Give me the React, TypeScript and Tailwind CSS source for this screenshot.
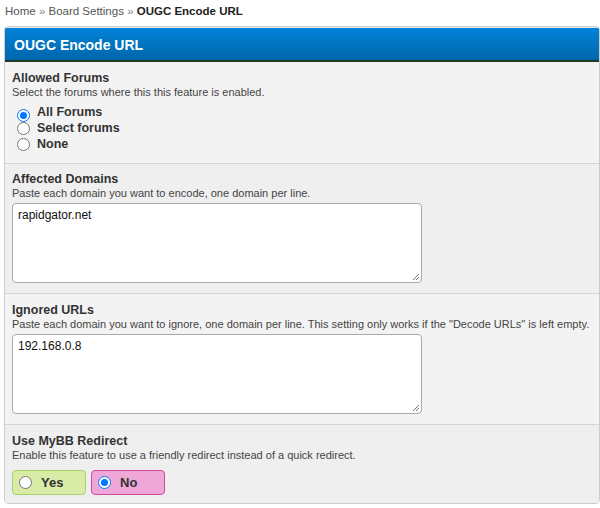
import React from "react";

const font = { fontFamily: "Tahoma, 'Liberation Sans', 'DejaVu Sans', sans-serif" };

function Radio({ checked }: { checked?: boolean }) {
  return (
    <span
      className={
        "inline-flex h-[13px] w-[13px] shrink-0 items-center justify-center rounded-full border " +
        (checked ? "border-[#0075ff] bg-white" : "border-[#767676] bg-white")
      }
    >
      {checked && <span className="h-[7px] w-[7px] rounded-full bg-[#0075ff]" />}
    </span>
  );
}

function Row({
  title,
  desc,
  alt,
  children,
  last,
  pt = "pt-[7px]",
}: {
  title: string;
  desc: string;
  alt?: boolean;
  children: React.ReactNode;
  last?: boolean;
  pt?: string;
}) {
  return (
    <div
      className={
        "px-[7px] " +
        pt +
        " " +
        (alt ? "bg-[#efefef] " : "bg-[#f3f3f3] ") +
        (last ? "" : "border-b border-[#d4d4d4]")
      }
    >
      <div className="text-[12.5px] font-bold leading-[16px] text-[#333]">{title}</div>
      <div className="text-[11px] leading-[13px] text-[#444]">{desc}</div>
      {children}
    </div>
  );
}

function TextArea({ value }: { value: string }) {
  return (
    <div className="relative mt-[3px] h-[80px] w-[410px] rounded-[4px] border border-[#a9a9a9] bg-white px-[5px] py-[4px] text-[12px] leading-[15px] text-[#111]">
      {value}
      <svg className="absolute bottom-[1px] right-[1px]" width="9" height="9" viewBox="0 0 9 9">
        <path d="M8 2 L2 8 M8 5 L5 8" stroke="#777" strokeWidth="1" />
      </svg>
    </div>
  );
}

export default function App() {
  return (
    <div className="h-[508px] w-[600px] bg-white" style={font}>
      <div className="px-[5px] pt-[3px] text-[11.5px] leading-[16px] text-[#555]">
        Home <span className="text-[#888]">»</span> Board Settings{" "}
        <span className="text-[#888]">»</span>{" "}
        <span className="font-bold text-[#222]">OUGC Encode URL</span>
      </div>
      <div className="ml-[4px] mt-[7px] overflow-hidden rounded-[4px] border border-[#cccccc]">
        <div className="h-[35px] border-t border-[#e6e6e6] border-b-2 border-b-[#1f3b28] bg-gradient-to-b from-[#0183da] to-[#0066aa] px-[9px] pt-[8px] text-[14px] font-bold leading-[18px] text-white">
          OUGC Encode URL
        </div>
        <Row title="Allowed Forums" desc="Select the forums where this this feature is enabled." pt="pt-[8px]">
          <div className="flex flex-col pb-[11px] pl-[5px] pt-[5px]">
            {[
              ["All Forums", true],
              ["Select forums", false],
              ["None", false],
            ].map(([l, c]) => (
              <div key={l as string} className="flex h-[16px] items-center gap-[7px]">
                <span className="mt-[3px]">
                  <Radio checked={c as boolean} />
                </span>
                <span className="text-[12.5px] font-bold text-[#333]">{l as string}</span>
              </div>
            ))}
          </div>
        </Row>
        <Row alt title="Affected Domains" desc="Paste each domain you want to encode, one domain per line.">
          <div className="pb-[10px]">
            <TextArea value="rapidgator.net" />
          </div>
        </Row>
        <Row
          title="Ignored URLs"
          desc={'Paste each domain you want to ignore, one domain per line. This setting only works if the "Decode URLs" is left empty.'}
          pt="pt-[8px]"
        >
          <div className="pb-[10px]">
            <TextArea value="192.168.0.8" />
          </div>
        </Row>
        <Row alt last title="Use MyBB Redirect" desc="Enable this feature to use a friendly redirect instead of a quick redirect." pt="pt-[8px]">
          <div className="flex gap-[5px] pb-[8px] pt-[8px]">
            <div className="flex h-[25px] w-[74px] items-center gap-[9px] rounded-[4px] border border-[#a5d36b] bg-[#d8eba7] pl-[6px]">
              <Radio />
              <span className="text-[13px] font-bold text-[#333]">Yes</span>
            </div>
            <div className="flex h-[25px] w-[74px] items-center gap-[9px] rounded-[4px] border border-[#d04a9b] bg-[#eea7d6] pl-[6px]">
              <Radio checked />
              <span className="text-[13px] font-bold text-[#333]">No</span>
            </div>
          </div>
        </Row>
      </div>
    </div>
  );
}
